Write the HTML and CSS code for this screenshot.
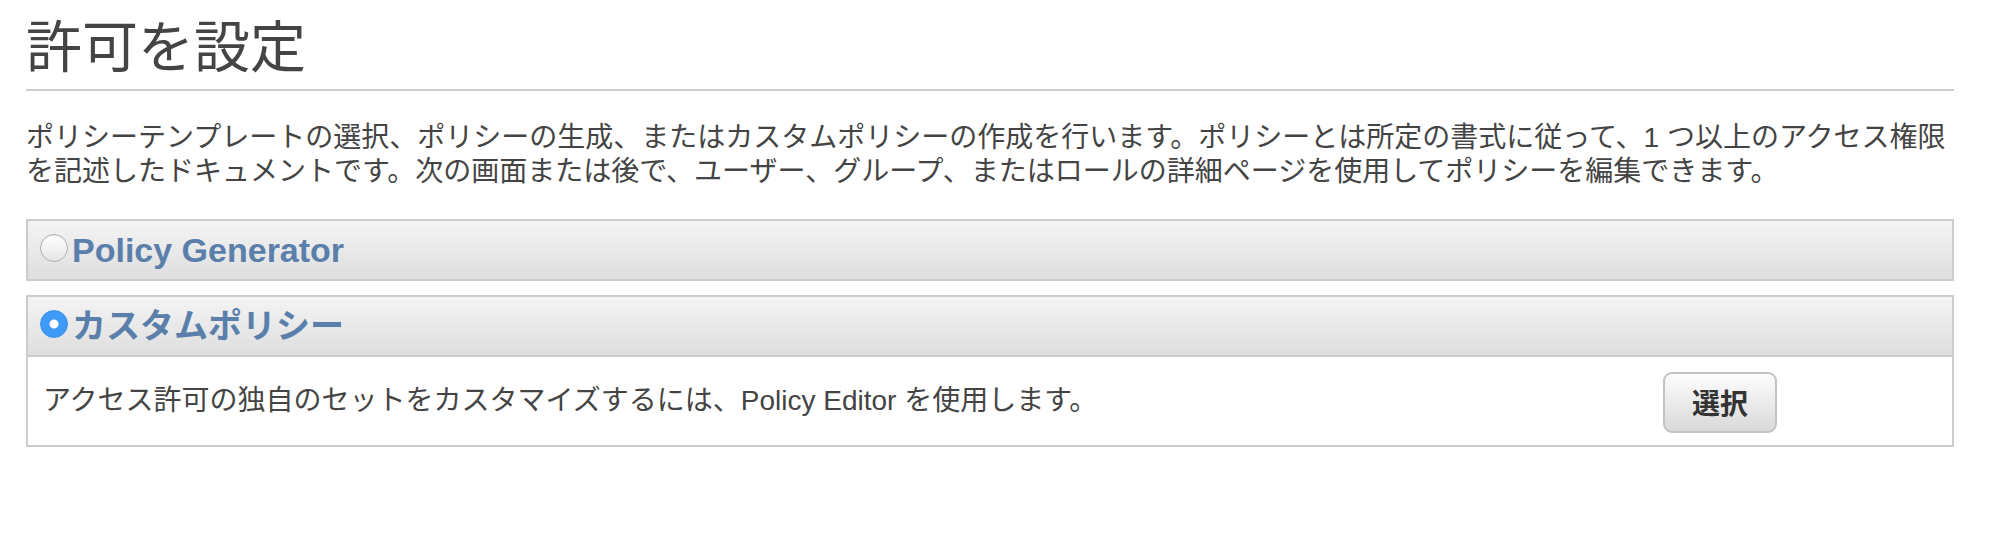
FILE: index.html
```html
<!DOCTYPE html>
<html lang="ja">
<head>
<meta charset="utf-8">
<title>許可を設定</title>
<link rel="stylesheet" href="styles.css">
</head>
<body>
<div class="page">
  <h1 class="title">許可を設定</h1>
  <p class="intro">ポリシーテンプレートの選択、ポリシーの生成、またはカスタムポリシーの作成を行います。ポリシーとは所定の書式に従って、1 つ以上のアクセス権限を記述したドキュメントです。次の画面または後で、ユーザー、グループ、またはロールの詳細ページを使用してポリシーを編集できます。</p>
  <section class="panel">
    <label class="panel-head">
      <input type="radio" name="mode" class="radio">
      <span class="panel-title">Policy Generator</span>
    </label>
  </section>
  <section class="panel panel-next">
    <label class="panel-head">
      <input type="radio" name="mode" class="radio" checked>
      <span class="panel-title">カスタムポリシー</span>
    </label>
    <div class="panel-body">
      <span class="panel-text">アクセス許可の独自のセットをカスタマイズするには、Policy Editor を使用します。</span>
      <button class="btn" type="button">選択</button>
    </div>
  </section>
</div>
</body>
</html>
```
FILE: styles.css
```css
html, body {
  margin: 0;
  padding: 0;
  background: #ffffff;
}

body {
  font-family: "Liberation Sans", "Noto Sans CJK JP", sans-serif;
  color: #444444;
}

.page {
  padding: 0 38px 0 26px;
}

.title {
  margin: 0;
  padding: 16px 0 9px 0;
  font-size: 56px;
  line-height: 64px;
  font-weight: normal;
  color: #444444;
  border-bottom: 2px solid #cfcfcf;
}

.intro {
  margin: 30px -12px 0 0;
  font-size: 28px;
  line-height: 34px;
  color: #444444;
}

.panel {
  margin-top: 30px;
  border: 2px solid #cccccc;
}

.panel-next {
  margin-top: 14px;
}

.panel-head {
  display: flex;
  align-items: center;
  height: 58px;
  padding-left: 12px;
  background: linear-gradient(#f4f4f4, #dedede);
}

.radio {
  appearance: none;
  -webkit-appearance: none;
  box-sizing: border-box;
  width: 28px;
  height: 28px;
  margin: -4px 4px 0 0;
  border-radius: 50%;
  border: 1px solid #b0b0b0;
  background: linear-gradient(#ffffff, #e6e6e6);
  box-shadow: inset 0 1px 1px rgba(0, 0, 0, 0.08);
}

.radio:checked {
  border: 1px solid #358fef;
  background: radial-gradient(circle, #ffffff 0 4px, #3d9af7 5px);
  box-shadow: none;
}

.panel-title {
  font-size: 34px;
  line-height: 38px;
  font-weight: bold;
  color: #5a7fab;
}

.panel-body {
  display: flex;
  align-items: center;
  height: 88px;
  padding-left: 15px;
  border-top: 2px solid #cccccc;
  background: #ffffff;
}

.panel-text {
  flex: 1;
  font-size: 28px;
  line-height: 34px;
  color: #444444;
}

.btn {
  box-sizing: border-box;
  width: 114px;
  height: 61px;
  margin: 2px 175px 0 0;
  padding: 0;
  border: 2px solid #c3c3c3;
  border-radius: 9px;
  background: linear-gradient(#fdfdfd, #d9d9d9);
  font-family: "Liberation Sans", "Noto Sans CJK JP", sans-serif;
  font-size: 28px;
  font-weight: bold;
  color: #333333;
}
```
